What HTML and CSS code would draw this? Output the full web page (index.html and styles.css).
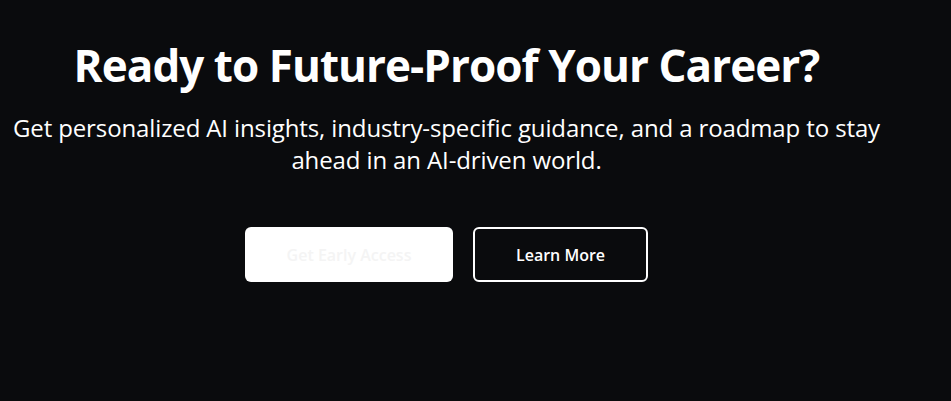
FILE: index.html
```html
<!DOCTYPE html>
<html lang="en">
<head>
<meta charset="utf-8">
<link rel="stylesheet" href="styles.css">
</head>
<body>
<section class="cta">
  <h1 class="cta-title">Ready to Future-Proof Your Career?</h1>
  <p class="cta-text">Get personalized AI insights, industry-specific guidance, and a roadmap to stay ahead in an AI-driven world.</p>
  <div class="cta-actions">
    <button class="btn btn-primary">Get Early Access</button>
    <button class="btn btn-outline">Learn More</button>
  </div>
</section>
</body>
</html>
```
FILE: styles.css
```css
html, body {
  margin: 0;
  padding: 0;
  background: #0a0b0d;
  height: 100%;
}
body {
  font-family: "Open Sans", "Noto Sans", sans-serif;
  color: #ffffff;
}
.cta {
  width: 893px;
  padding-top: 38px;
  display: flex;
  flex-direction: column;
  align-items: center;
  text-align: center;
}
.cta-title {
  margin: 0;
  font-size: 44px;
  font-weight: 700;
  line-height: 54px;
  letter-spacing: -0.95px;
}
.cta-text {
  margin: 20px 0 0;
  max-width: 884px;
  font-size: 24px;
  line-height: 32px;
  letter-spacing: -0.12px;
}
.cta-actions {
  margin-top: 51px;
  display: flex;
  gap: 20px;
}
.btn {
  font-family: inherit;
  font-size: 16px;
  font-weight: 600;
  border-radius: 6px;
  height: 55px;
  cursor: pointer;
}
.btn-primary {
  width: 208px;
  background: #ffffff;
  color: #f4f4f4;
  border: none;
}
.btn-outline {
  width: 175px;
  background: #0a0b0d;
  color: #ffffff;
  border: 2px solid #ffffff;
}
```
